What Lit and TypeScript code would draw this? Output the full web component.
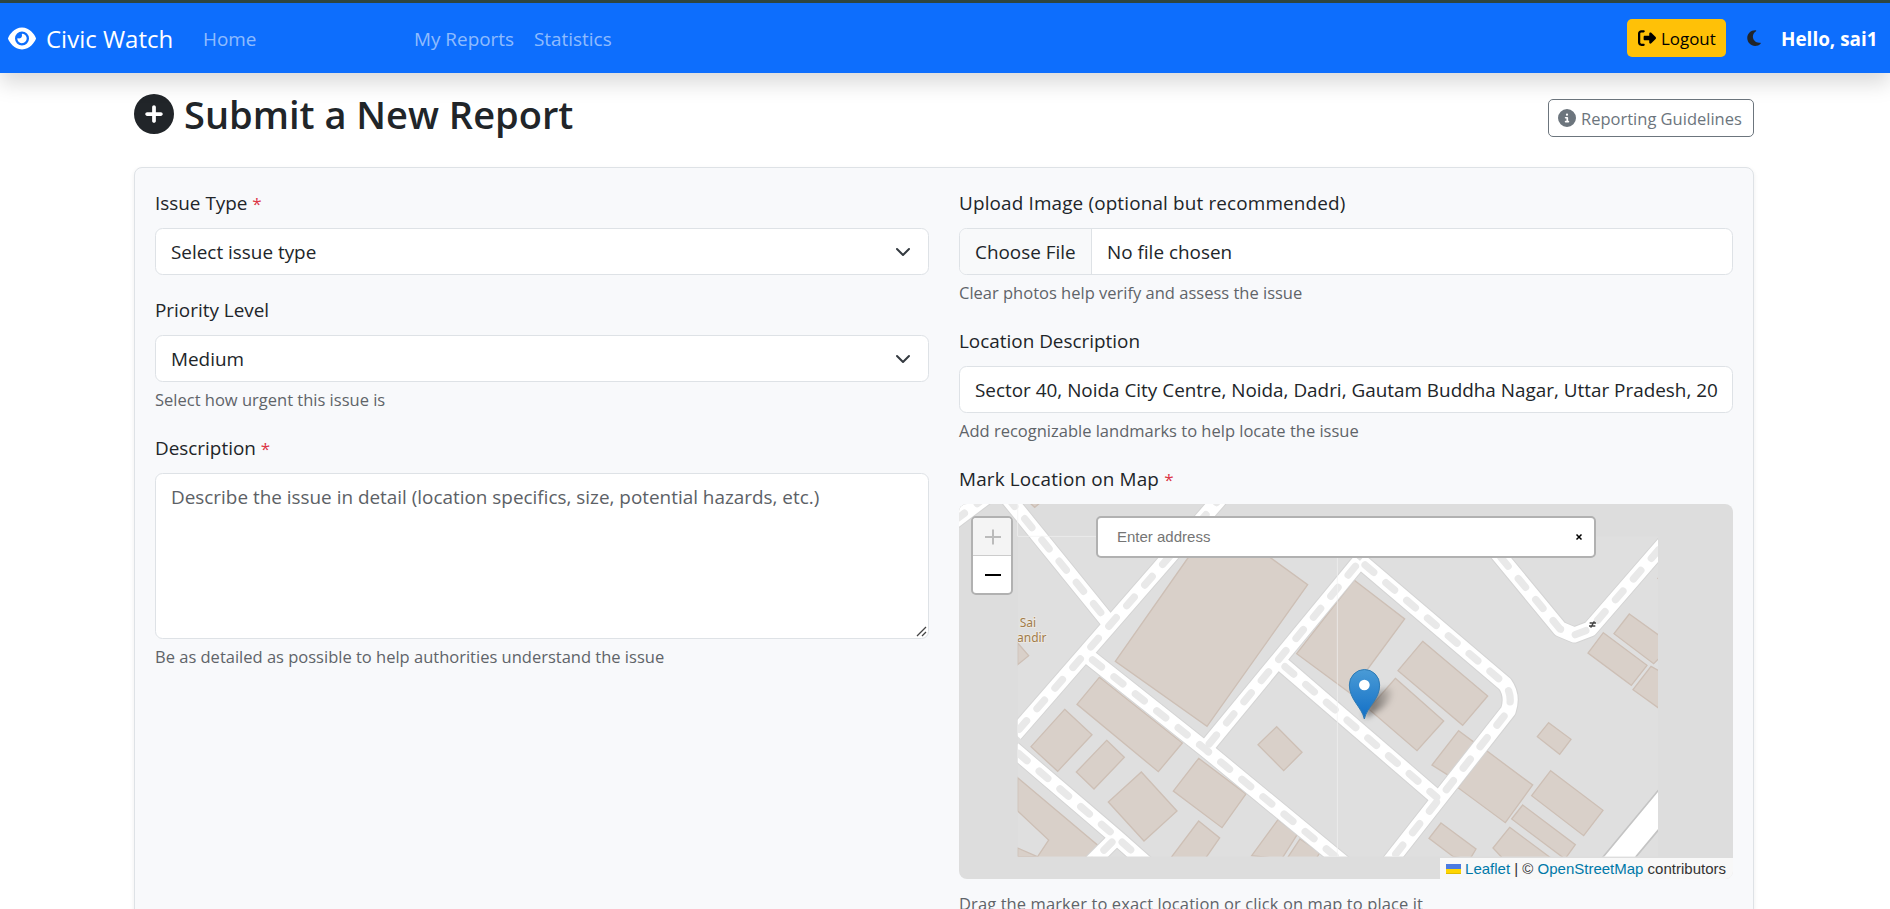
import { LitElement, html, css, svg } from "lit";
import { customElement } from "lit/decorators.js";

const buildings: string[] = [
  "720,198 950,198 1073,287 771,712 496,517",
  "448,565 697,762 625,848 381,646",
  "344,661 426,737 323,847 243,773",
  "470,754 523,805 432,900 379,849",
  "574,849 681,966 582,1056 475,939",
  "746,808 888,915 816,1016 670,906",
  "746,996 809,1047 765,1110 660,1110",
  "980,713 1056,790 1001,845 924,767",
  "984,992 1042,1036 995,1110 905,1100",
  "1050,1050 1110,1090 1095,1115 1010,1110",
  "203,866 445,1070 420,1115 255,1115 296,1053 203,966",
  "203,1077 262,1103 203,1103",
  "203,462 236,500 203,527",
  "238,40 272,40 254,55",
  "1212,273 1364,390 1200,612 1040,494 1168,330",
  "1418,457 1613,621 1538,709 1344,545",
  "1336,568 1481,696 1401,785 1256,660",
  "1526,725 1575,762 1500,862 1446,828",
  "1608,784 1748,888 1666,1001 1524,896",
  "1796,701 1863,751 1829,796 1762,743",
  "1802,845 1959,964 1901,1040 1745,920",
  "1718,948 1876,1067 1845,1110 1685,990",
  "1679,1015 1800,1105 1660,1110 1629,1077",
  "1473,1002 1578,1080 1560,1110 1510,1103 1437,1048",
  "1960,431 2091,529 2044,589 1914,492",
  "2038,375 2135,445 2135,500 2111,524 1992,434",
  "2103,532 2135,550 2135,664 2049,602",
  "2124,268 2135,262 2135,278",
];

const roads: string[] = [
  "M0,105 L120,15",
  "M160,10 L480,405",
  "M835,0 L195,735",
  "M412,500 L765,780 L1190,1130",
  "M190,780 L500,1045 L590,1125",
  "M500,1045 L420,1125",
  "M765,780 L1230,215",
  "M990,520 L1460,925",
  "M1230,215 L1665,585 Q1690,620 1675,665 L1310,1130",
  "M1640,190 L1830,420 L1873,438 L1920,420 L2150,155",
];

@customElement("civic-map")
export class CivicMap extends LitElement {
  static styles = css`
    :host { display: block; position: relative; height: 375px; border-radius: 8px; overflow: hidden; background: #ddd;
      font-family: "Liberation Sans", Arial, sans-serif; }
    .tiles { display: block; width: 100%; height: 100%; }
    .zoom { position: absolute; left: 12px; top: 12px; width: 42px; height: 79px; box-sizing: border-box;
      border: 2px solid #b1b1b1; border-radius: 5px; background: #fff; overflow: hidden; }
    .zoom svg { display: block; }
    .search { position: absolute; left: 137px; top: 12px; width: 500px; height: 42px; box-sizing: border-box;
      display: flex; align-items: center; justify-content: space-between; padding: 0 11px 0 19px;
      border: 2px solid #b1b1b1; border-radius: 5px; background: #fff; font-size: 15px; color: #757575; }
    .attr { position: absolute; right: 0; bottom: 0; height: 21px; display: flex; align-items: center; gap: 4px;
      padding: 0 7px 0 6px; background: rgba(255,255,255,.8); color: #333; font-size: 15px; white-space: pre; }
    .attr a { color: #0078a8; }
  `;
  render() {
    return html`
      <svg class="tiles" viewBox="27 45 2322 1125" preserveAspectRatio="none">
        <defs>
          <clipPath id="area"><path d="M27,45H2124V1103H203V142H27Z"/></clipPath>
          <linearGradient id="pin" x1="0" y1="0" x2="0" y2="1"><stop offset="0" stop-color="#4a9bd6"/><stop offset="1" stop-color="#126fc6"/></linearGradient>
          <linearGradient id="shade" x1="0" y1="0" x2="1" y2="0"><stop offset="0" stop-color="#000" stop-opacity=".6"/><stop offset="1" stop-color="#000" stop-opacity=".08"/></linearGradient>
          <filter id="soft" x="-50%" y="-50%" width="200%" height="200%"><feGaussianBlur stdDeviation="9"/></filter>
        </defs>
        <g clip-path="url(#area)">
          <rect x="203" y="142" width="1921" height="961" fill="#dfdfdf"/>
          ${buildings.map((p) => svg`<polygon points=${p} fill="#d9d0c9" stroke="#cdbfb5" stroke-width="4"/>`)}
          <g fill="none" stroke-linejoin="round">
            ${roads.map((d) => svg`<path d=${d} stroke="#d4d4d4" stroke-width="51"/>`)}
            ${roads.map((d) => svg`<path d=${d} stroke="#fff" stroke-width="45"/>`)}
            ${roads.map((d) => svg`<path d=${d} stroke="#e9e9e9" stroke-width="22" stroke-linecap="round" stroke-dasharray="34 48" stroke-dashoffset="-20"/>`)}
          </g>
          <path d="M1950,1115L2130,898V1017L2048,1115Z" fill="#fff" stroke="#c4c4c4" stroke-width="5"/>
          <path d="M203,45V142H460M1162,142V1103" fill="none" stroke="#f1f1f1" stroke-width="2"/>
          <g font-family="Noto Sans" font-size="36" fill="#a07c4c" stroke="#eee9e2" stroke-width="5" paint-order="stroke">
            <text x="209" y="413">Sai</text><text x="201" y="458">andir</text>
          </g>
          <path d="M1919,402h19M1917,411h19M1922,416l11,-19" stroke="#444" stroke-width="4"/>
        </g>
        <path d="M1243,688L1262,630Q1290,590 1322,600Q1335,625 1300,655Z" fill="url(#shade)" filter="url(#soft)"/>
        <path d="M1243,690C1236,655 1198,632 1198,588A45,46 0 0 1 1289,588C1289,632 1250,655 1243,690Z" fill="url(#pin)" stroke="#2e7bb5" stroke-width="3"/>
        <circle cx="1243" cy="588" r="16" fill="#fff"/>
      </svg>
      <div class="zoom"><svg width="38" height="75" viewBox="0 0 38 75">
        <rect width="38" height="37" fill="#f4f4f4"/><path d="M0,37.500H38" stroke="#ccc"/>
        <path d="M12,19H28M20,11.500V26.500" stroke="#bbb" stroke-width="2"/><path d="M12,57H28" stroke="#000" stroke-width="2"/></svg></div>
      <div class="search"><span>Enter address</span>
        <svg width="8" height="8" viewBox="0 0 8 8"><path d="M1.500,1.500L6.500,6.500M6.500,1.500L1.500,6.500" stroke="#000" stroke-width="1.500"/></svg></div>
      <div class="attr"><svg width="15" height="10" viewBox="0 0 15 10"><path d="M0,0H15V5H0Z" fill="#4c7be1"/><path d="M0,5H15V9H0Z" fill="#ffd500"/><path d="M0,9H15V10H0Z" fill="#e0bc00"/></svg><span><a>Leaflet</a> | © <a>OpenStreetMap</a> contributors</span></div>
    `;
  }
}

@customElement("app-root")
export class AppRoot extends LitElement {
  static styles = css`
    :host { display: block; height: 909px; overflow: hidden; background: #fff; color: #212529;
      font: 18.900px/30px "Open Sans", "Noto Sans", sans-serif; }
    * { box-sizing: border-box; }
    svg { display: block; flex: none; }
    .strip { height: 3px; background: #2f4742; }
    nav { position: relative; height: 70px; display: flex; align-items: center; background: #0d6efd; color: #fff;
      padding: 0 14px 0 8px; box-shadow: 0 10px 20px rgba(0,0,0,.15); white-space: nowrap; }
    nav span { padding-top: 1px; }
    .brand { display: flex; align-items: center; gap: 10px; width: 195px; font-size: 24px; }
    .link { color: rgba(255,255,255,.55); }
    .home { width: 211px; }
    .mine { width: 120px; }
    .logout { margin-left: auto; width: 99px; height: 38px; border-radius: 5px; background: #ffc107; color: #000;
      display: flex; align-items: center; gap: 5px; padding-left: 11px; font-size: 16.900px; }
    .moon { margin: 0 20px 0 21px; }
    .hello { font-weight: 700; width: 95px; }
    .wrap { width: 1620px; margin: 0 0 0 134px; }
    .head { display: flex; justify-content: space-between; height: 94px; padding-top: 21px; }
    h1 { margin: 0; display: flex; gap: 10px; font-size: 38px; line-height: 41px; font-weight: 600; white-space: nowrap; }
    .guide { margin-top: 5px; width: 206px; height: 38px; border: 1px solid #6c757d; border-radius: 5px; color: #6c757d;
      display: flex; align-items: center; gap: 5px; padding-left: 9px; font-size: 16.500px; white-space: nowrap; }
    .guide span { padding-top: 1px; }
    .card { display: grid; grid-template-columns: repeat(2, minmax(0, 1fr)); gap: 30px; padding: 20px; height: 800px;
      border: 1px solid #dee2e6; border-radius: 8px; background: #f8f9fb; box-shadow: 0 2px 5px rgba(0,0,0,.07); }
    .label { height: 30px; margin-bottom: 10px; white-space: nowrap; }
    .wide { letter-spacing: .15px; }
    .req { color: #dc3545; font-size: 17px; }
    .control { height: 47px; border: 1px solid #dee2e6; border-radius: 7.500px; background: #fff; display: flex; align-items: center;
      padding: 0 15px; white-space: nowrap; overflow: hidden; }
    .select { justify-content: space-between; padding-right: 17px; }
    .area { height: 166px; align-items: flex-start; padding-top: 8px; color: #5c6166; position: relative; }
    .grip { position: absolute; right: 1px; bottom: 1px; }
    .file { padding-left: 0; }
    .choose { align-self: stretch; display: flex; align-items: center; width: 132px; padding-left: 15px; margin-right: 15px;
      background: #f8f9fa; border-right: 1px solid #dee2e6; }
    .help { height: 26px; line-height: 26px; margin-top: 5px; font-size: 16.500px; color: #5f6469; white-space: nowrap; }
    .below-map { margin-top: 12px; letter-spacing: .1px; }
    .field { margin-bottom: 20px; }
  `;
  render() {
    return html`
      <div class="strip"></div>
      <nav>
        <div class="brand"><svg width="28" height="25" viewBox="0 0 576 512"><path fill="#fff" d="M288 32c-80.800 0-145.500 36.800-192.600 80.600C48.600 156 17.300 208 2.500 243.700c-3.300 7.900-3.300 16.700 0 24.600C17.300 304 48.600 356 95.400 399.400C142.500 443.200 207.200 480 288 480s145.500-36.800 192.600-80.600c46.800-43.500 78.100-95.400 93-131.100c3.300-7.900 3.300-16.700 0-24.600c-14.900-35.700-46.200-87.700-93-131.100C433.500 68.800 368.800 32 288 32zM144 256a144 144 0 1 1 288 0 144 144 0 1 1 -288 0zm144-64c0 35.300-28.700 64-64 64c-7.100 0-13.900-1.200-20.300-3.300c-5.500-1.800-11.900 1.600-11.700 7.400c.3 6.900 1.300 13.800 3.200 20.700c13.700 51.200 66.400 81.600 117.600 67.900s81.600-66.400 67.900-117.600c-11.100-41.500-47.800-69.400-88.600-71.100c-5.800-.2-9.200 6.100-7.400 11.700c2.100 6.400 3.300 13.200 3.300 20.300z"/></svg><span>Civic Watch</span></div>
        <span class="link home">Home</span><span class="link mine">My Reports</span><span class="link">Statistics</span>
        <div class="logout"><svg width="18" height="18" viewBox="0 0 512 512"><path d="M377.900 105.900L500.700 228.700c7.200 7.200 11.300 17.100 11.300 27.300s-4.100 20.100-11.300 27.300L377.900 406.100c-6.400 6.400-15 9.900-24 9.900c-18.700 0-33.900-15.200-33.900-33.900l0-62.100-128 0c-17.700 0-32-14.300-32-32l0-64c0-17.700 14.300-32 32-32l128 0 0-62.100c0-18.700 15.200-33.900 33.900-33.900c9 0 17.600 3.600 24 9.900zM160 96L96 96c-17.700 0-32 14.300-32 32l0 256c0 17.700 14.300 32 32 32l64 0c17.700 0 32 14.300 32 32s-14.300 32-32 32l-64 0c-53 0-96-43-96-96L0 128C0 75 43 32 96 32l64 0c17.700 0 32 14.300 32 32s-14.300 32-32 32z"/></svg><span>Logout</span></div>
        <svg class="moon" width="14" height="18" viewBox="0 0 384 512"><path fill="#212529" d="M223.500 32C100 32 0 132.300 0 256S100 480 223.500 480c60.600 0 115.500-24.200 155.800-63.400c5-4.900 6.300-12.500 3.100-18.700s-10.100-9.700-17-8.500c-9.800 1.700-19.800 2.600-30.100 2.600c-96.900 0-175.500-78.800-175.500-176c0-65.800 36-123.100 89.300-153.300c6.100-3.500 9.200-10.500 7.700-17.300s-7.300-11.900-14.300-12.500c-6.300-.5-12.600-.8-19-.8z"/></svg>
        <span class="hello">Hello, sai1</span>
      </nav>
      <div class="wrap">
        <div class="head">
          <h1><svg width="40" height="40" viewBox="0 0 512 512"><path fill="#212529" d="M256 512A256 256 0 1 0 256 0a256 256 0 1 0 0 512zM232 344l0-64-64 0c-13.300 0-24-10.700-24-24s10.700-24 24-24l64 0 0-64c0-13.300 10.700-24 24-24s24 10.700 24 24l0 64 64 0c13.300 0 24 10.700 24 24s-10.700 24-24 24l-64 0 0 64c0 13.300-10.700 24-24 24s-24-10.700-24-24z"/></svg><span>Submit a New Report</span></h1>
          <div class="guide"><svg width="18" height="18" viewBox="0 0 512 512"><path fill="#6c757d" d="M256 512A256 256 0 1 0 256 0a256 256 0 1 0 0 512zM216 336l24 0 0-64-24 0c-13.300 0-24-10.700-24-24s10.700-24 24-24l48 0c13.300 0 24 10.700 24 24l0 88 8 0c13.300 0 24 10.700 24 24s-10.700 24-24 24l-80 0c-13.300 0-24-10.700-24-24s10.700-24 24-24zm40-208a32 32 0 1 1 0 64 32 32 0 1 1 0-64z"/></svg><span>Reporting Guidelines</span></div>
        </div>
        <div class="card">
          <div>
            <div class="field"><div class="label"><span>Issue Type</span> <span class="req">*</span></div>
              <div class="control select"><span>Select issue type</span>${this.chevron()}</div></div>
            <div class="field"><div class="label"><span>Priority Level</span></div>
              <div class="control select"><span>Medium</span>${this.chevron()}</div>
              <div class="help"><span>Select how urgent this issue is</span></div></div>
            <div class="field"><div class="label"><span>Description</span> <span class="req">*</span></div>
              <div class="control area"><span>Describe the issue in detail (location specifics, size, potential hazards, etc.)</span>
                <svg class="grip" width="11" height="11" viewBox="0 0 11 11"><path d="M1,10L10,1M6,10L10,6" stroke="#444" stroke-width="1.300"/></svg></div>
              <div class="help"><span>Be as detailed as possible to help authorities understand the issue</span></div></div>
          </div>
          <div>
            <div class="field"><div class="label wide"><span>Upload Image (optional but recommended)</span></div>
              <div class="control file"><span class="choose">Choose File</span><span>No file chosen</span></div>
              <div class="help"><span>Clear photos help verify and assess the issue</span></div></div>
            <div class="field"><div class="label"><span>Location Description</span></div>
              <div class="control"><span>Sector 40, Noida City Centre, Noida, Dadri, Gautam Buddha Nagar, Uttar Pradesh, 20</span></div>
              <div class="help"><span>Add recognizable landmarks to help locate the issue</span></div></div>
            <div class="field"><div class="label wide"><span>Mark Location on Map</span> <span class="req">*</span></div>
              <civic-map></civic-map>
              <div class="help below-map"><span>Drag the marker to exact location or click on map to place it</span></div></div>
          </div>
        </div>
      </div>
    `;
  }
  private chevron() {
    return html`<svg width="16" height="16" viewBox="0 0 16 16"><path d="m2 5 6 6 6-6" fill="none" stroke="#343a40" stroke-width="2" stroke-linecap="round" stroke-linejoin="round"/></svg>`;
  }
}
